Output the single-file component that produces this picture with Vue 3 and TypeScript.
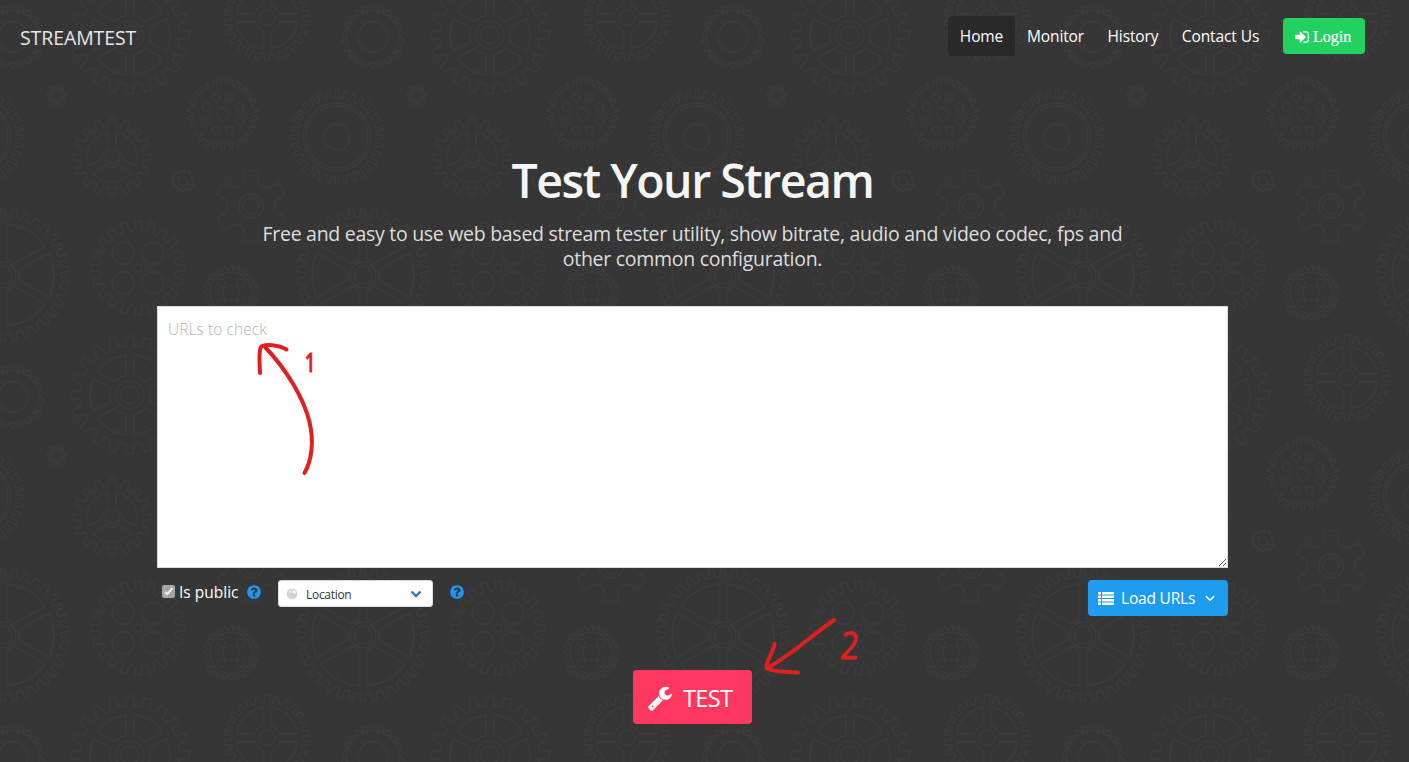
<script setup lang="ts">
import { ref } from 'vue'

interface NavItem { label: string; cls: string }
interface Gear { x: number; y: number; outer: number; inner: number; teeth: number; rings: number[]; spokes: number; hub: number; rim: number; holes?: number; holeR?: number; holeD?: number }

const nav: NavItem[] = [
  { label: 'Home', cls: 'home active' },
  { label: 'Monitor', cls: 'monitor' },
  { label: 'History', cls: 'history' },
  { label: 'Contact Us', cls: 'contact' },
]

const isPublic = ref(true)
const urls = ref('')

const TILE = 360
const gears: Gear[] = [
  { x: 130, y: 35, outer: 59, inner: 49, teeth: 20, rings: [9, 14], spokes: 6, hub: 20, rim: 40 },
  { x: 267, y: 18, outer: 43, inner: 36, teeth: 26, rings: [8], spokes: 4, hub: 13, rim: 31 },
  { x: 13, y: 37, outer: 31, inner: 28, teeth: 22, rings: [15, 26], spokes: 0, hub: 0, rim: 0 },
  { x: 57, y: 95, outer: 10, inner: 7, teeth: 9, rings: [5], spokes: 0, hub: 0, rim: 0 },
  { x: 223, y: 114, outer: 35, inner: 30, teeth: 26, rings: [6], spokes: 0, hub: 0, rim: 0, holes: 8, holeR: 4, holeD: 18 },
  { x: 337, y: 137, outer: 47, inner: 39, teeth: 32, rings: [13, 31, 34], spokes: 0, hub: 0, rim: 0 },
  { x: 112, y: 157, outer: 39, inner: 31, teeth: 16, rings: [7], spokes: 3, hub: 10, rim: 25 },
  { x: 183, y: 181, outer: 11, inner: 9, teeth: 10, rings: [5], spokes: 0, hub: 0, rim: 0 },
  { x: 251, y: 206, outer: 36, inner: 24, teeth: 6, rings: [8, 12], spokes: 0, hub: 0, rim: 0 },
  { x: 3, y: 275, outer: 66, inner: 58, teeth: 34, rings: [9, 13], spokes: 6, hub: 16, rim: 51 },
  { x: 138, y: 268, outer: 47, inner: 38, teeth: 20, rings: [4], spokes: 0, hub: 0, rim: 0, holes: 4, holeR: 11, holeD: 21 },
  { x: 231, y: 293, outer: 27, inner: 24, teeth: 24, rings: [8, 21], spokes: 0, hub: 0, rim: 0, holes: 4, holeR: 4, holeD: 14 },
]

const polar = (r: number, a: number) => `${(r * Math.sin(a)).toFixed(1)} ${(-r * Math.cos(a)).toFixed(1)}`

function gearPath(g: Gear): string {
  const step = (Math.PI * 2) / g.teeth
  let d = ''
  for (let i = 0; i < g.teeth; i++) {
    const a = i * step
    d += `${i ? 'L' : 'M'}${polar(g.inner, a - step * 0.3)}L${polar(g.outer, a - step * 0.18)}L${polar(g.outer, a + step * 0.18)}L${polar(g.inner, a + step * 0.3)}`
  }
  d += 'Z'
  const seg = (Math.PI * 2) / (g.spokes || 1)
  for (let i = 0; i < g.spokes; i++) {
    const a = i * seg
    const o = 4 / g.rim
    const h = 4 / g.hub
    d += `M${polar(g.hub, a + h)}L${polar(g.rim, a + o)}A${g.rim} ${g.rim} 0 0 1 ${polar(g.rim, a + seg - o)}L${polar(g.hub, a + seg - h)}A${g.hub} ${g.hub} 0 0 0 ${polar(g.hub, a + h)}Z`
  }
  return d
}

function holes(g: Gear) {
  const n = g.holes ?? 0
  return Array.from({ length: n }, (_, i) => {
    const a = ((i + 0.5) * Math.PI * 2) / n
    return { x: (g.holeD ?? 0) * Math.sin(a), y: (g.holeD ?? 0) * Math.cos(a) }
  })
}

// Gears crossing the tile edge are repeated on the neighbouring side.
const tiled = gears.flatMap((g) =>
  [-TILE, 0, TILE].flatMap((dx) =>
    [-TILE, 0, TILE].map((dy) => ({ g, x: g.x + dx, y: g.y + dy, d: gearPath(g), holes: holes(g) })),
  ).filter((p) => p.x > -70 && p.x < TILE + 70 && p.y > -70 && p.y < TILE + 70),
)

const questionPath = 'M1024 1376v-192q0-14-9-23t-23-9h-192q-14 0-23 9t-9 23v192q0 14 9 23t23 9h192q14 0 23-9t9-23zm256-672q0-88-55.5-163t-138.5-116-170-41q-243 0-371 213-15 24 8 42l132 100q7 6 19 6 16 0 25-12 53-68 86-92 34-24 86-24 48 0 85.5 26t37.5 59q0 38-20 61t-68 45q-63 28-115.5 86.5t-52.5 125.5v36q0 14 9 23t23 9h192q14 0 23-9t9-23q0-19 21.5-49.5t54.5-49.5q32-18 49-28.5t46-35 44.5-48 28-60.5 12.5-81zm384 192q0 209-103 385.5t-279.5 279.5-385.5 103-385.5-103-279.5-279.5-103-385.5 103-385.5 279.5-279.5 385.5-103 385.5 103 279.5 279.5 103 385.5z'
</script>

<template>
  <div class="page">
    <svg class="backdrop" aria-hidden="true">
      <defs>
        <pattern id="gears" :width="TILE" :height="TILE" patternUnits="userSpaceOnUse">
          <g v-for="(p, i) in tiled" :key="i" :transform="`translate(${p.x} ${p.y})`" class="gear">
            <path :d="p.d" />
            <circle v-for="r in p.g.rings" :key="r" :r="r" />
            <circle v-for="(h, k) in p.holes" :key="`h${k}`" :cx="h.x" :cy="h.y" :r="p.g.holeR" />
          </g>
        </pattern>
      </defs>
      <rect width="100%" height="100%" fill="url(#gears)" />
    </svg>

    <header class="navbar">
      <a class="brand">STREAMTEST</a>
      <nav class="menu">
        <a v-for="item in nav" :key="item.label" class="link" :class="item.cls"><span>{{ item.label }}</span></a>
        <button class="login" type="button">
          <svg viewBox="0 0 1792 1792" width="16" height="16"><path d="M1312 896q0 26-19 45l-544 544q-19 19-45 19t-45-19-19-45v-288h-448q-26 0-45-19t-19-45v-384q0-26 19-45t45-19h448v-288q0-26 19-45t45-19 45 19l544 544q19 19 19 45zm352-352v704q0 119-84.5 203.5t-203.5 84.5h-320q-13 0-22.5-9.5t-9.5-22.5q0-4-1-20t-.5-26.5 3-23.5 10-19.5 20.5-6.5h320q66 0 113-47t47-113v-704q0-66-47-113t-113-47h-312l-11.5-1-11.5-3-8-5.5-7-9-2-13.5q0-4-1-20t-.5-26.5 3-23.5 10-19.5 20.5-6.5h320q119 0 203.5 84.5t84.5 203.5z" /></svg>
          <span>Login</span>
        </button>
      </nav>
    </header>

    <main class="content">
      <h1 class="title">Test Your Stream</h1>
      <p class="subtitle">
        <span class="line first">Free and easy to use web based stream tester utility, show bitrate, audio and video codec, fps and</span>
        <span class="line second">other common configuration.</span>
      </p>

      <textarea v-model="urls" class="urls" placeholder="URLs to check" spellcheck="false"></textarea>

      <div class="options">
        <label class="public" @click.prevent="isPublic = !isPublic">
          <span class="check">
            <svg v-if="isPublic" viewBox="0 0 13 13" width="13" height="13"><path d="M3 6.8 5.4 9.2 10.3 3.2" /></svg>
          </span>
          <span class="public-text">Is public</span>
        </label>
        <svg class="help one" viewBox="0 0 1792 1792" width="16" height="16"><path :d="questionPath" /></svg>
        <div class="select">
          <svg class="globe" viewBox="0 0 12 12" width="12" height="12">
            <circle cx="6" cy="6" r="5.400" />
            <path d="M3.200 3.400 5.200 2 6 3.400 4.600 5.200zM7 2.400 9.200 2.800 10.200 5 8.200 6 7 4.600z" />
          </svg>
          <span class="select-text">Location</span>
          <svg class="chevron" viewBox="0 0 12 8" width="12" height="8"><path d="M1.500 1.500 6 6 10.500 1.500" /></svg>
        </div>
        <svg class="help two" viewBox="0 0 1792 1792" width="16" height="16"><path :d="questionPath" /></svg>
        <button class="load" type="button">
          <svg class="list" viewBox="0 0 16 13" width="16" height="13">
            <path d="M0 0h3v2.600H0zM4 0h12v2.600H4zM0 3.500h3v2.600H0zM4 3.500h12v2.600H4zM0 7h3v2.600H0zM4 7h12v2.600H4zM0 10.400h3V13H0zM4 10.400h12V13H4z" />
          </svg>
          <span class="load-text">Load URLs</span>
          <svg class="angle" viewBox="0 0 10 7" width="10" height="7"><path d="M1 1.200 5 5.200 9 1.200" /></svg>
        </button>
      </div>

      <button class="test" type="button">
        <svg viewBox="0 0 1792 1792" width="26" height="26"><path d="M448 1472q0-26-19-45t-45-19-45 19-19 45 19 45 45 19 45-19 19-45zm644-420l-682 682q-37 37-90 37-52 0-91-37l-106-108q-38-36-38-90 0-53 38-91l681-681q39 98 114.5 173.5t173.5 114.5zm634-435q0 39-23 106-47 134-164.5 217.5t-258.5 83.5q-185 0-316.5-131.5t-131.5-316.5 131.5-316.5 316.5-131.5q58 0 121.5 16.5t107.5 46.5q16 11 16 28t-16 28l-293 169v224l193 107q5-3 79-48.5t135.5-81 70.5-35.5q15 0 23.5 10t8.500 25z" /></svg>
        <span>TEST</span>
      </button>
    </main>

    <svg class="marks" viewBox="0 0 1409 762" width="1409" height="762">
      <g class="ink">
        <path d="M304.500 473C312 460 314 441 309.500 422C304 399 287 370 265 347" />
        <path d="M260 373C259.500 362 258.500 351 261 347C264 343.500 279 345 286.500 349.500" />
        <path d="M834 620C812 635 794 653 767.500 668" />
        <path d="M774.500 644C773.500 653 766 660 766.500 668C771 672 786 671.500 798 672.500" />
      </g>
      <text class="digit one" transform="translate(305 371.500) scale(.66 1)">1</text>
      <text class="digit two" transform="translate(839.500 659) skewX(-5) scale(.84 1)">2</text>
    </svg>
  </div>
</template>

<style>
html,
body {
  margin: 0;
  background: #363636;
}
</style>

<style scoped>
.page {
  position: relative;
  width: 1409px;
  height: 762px;
  overflow: hidden;
  background: #363636;
  color: #f5f5f5;
  font-family: "Open Sans", "Noto Sans", sans-serif;
  font-size: 16px;
}
.page *,
.page {
  box-sizing: border-box;
}
.backdrop {
  position: absolute;
  inset: 0;
  width: 100%;
  height: 100%;
}
.gear {
  fill: none;
  stroke: #3b3b3b;
  stroke-width: 1.3;
}
button {
  border: 0;
  border-radius: 4px;
  padding: 0;
  font-family: inherit;
  color: #fff;
  white-space: nowrap;
}
svg {
  flex: none;
}
.navbar {
  position: relative;
  display: flex;
  justify-content: space-between;
  height: 72px;
  padding: 16px 44px 0 20px;
}
.brand {
  height: 44px;
  line-height: 43px;
  font-size: 19.500px;
  letter-spacing: -0.1px;
  color: #e6e6e6;
}
.menu {
  display: flex;
}
.link {
  display: flex;
  justify-content: center;
  height: 40px;
  line-height: 41px;
  border-radius: 4px;
  font-size: 15.500px;
  letter-spacing: -0.1px;
  white-space: nowrap;
  color: #fff;
}
.active {
  background: #292929;
}
.home { width: 67px; }
.monitor { width: 81px; }
.history { width: 74px; }
.contact { width: 101px; }
.login {
  display: flex;
  align-items: center;
  width: 82px;
  height: 36px;
  margin: 2px 0 0 12px;
  padding: 1px 0 0 11px;
  gap: 3px;
  background: #23d160;
  font: 16px "Liberation Serif", serif;
  -webkit-text-stroke: 0.2px #fff;
}
.login svg,
.test svg {
  fill: #fff;
}
.content {
  position: relative;
  display: flex;
  flex-direction: column;
  align-items: center;
  width: 1071px;
  margin: 80px 0 0 157px;
}
.title {
  margin: 0;
  height: 56px;
  line-height: 56px;
  font-size: 46.500px;
  font-weight: 600;
  letter-spacing: -1.500px;
  white-space: nowrap;
  color: #f5f5f5;
}
.subtitle {
  margin: 13px 0 0;
  font-size: 19.500px;
  letter-spacing: -0.285px;
  line-height: 25px;
  color: #dedede;
  text-align: center;
}
.line {
  display: block;
  white-space: nowrap;
}
.urls {
  display: block;
  width: 1071px;
  height: 262px;
  margin: 35px 0 0;
  padding: 10px;
  border: 1px solid #dbdbdb;
  border-radius: 0;
  outline: none;
  resize: vertical;
  background: #fff;
  color: #363636;
  font: 15.500px/24px "Open Sans", "Noto Sans", sans-serif;
  letter-spacing: 0.080px;
}
.urls::placeholder {
  color: #b4b6ba;
  font-weight: 300;
}
.options {
  display: flex;
  align-items: flex-start;
  width: 100%;
  height: 36px;
  margin-top: 12px;
}
.public {
  display: flex;
  width: 84px;
  padding-left: 5px;
  line-height: 24px;
}
.check {
  width: 13px;
  height: 13px;
  margin: 5px 4px 0 0;
  border-radius: 2px;
  background: #a6a6a6;
}
.check svg {
  display: block;
  fill: none;
  stroke: #f0f0f0;
  stroke-width: 2;
}
.public-text {
  white-space: nowrap;
  font-size: 15.500px;
  color: #fff;
}
.help {
  margin-top: 4px;
  fill: #2196ee;
}
.help.one {
  margin-left: 5px;
}
.select {
  display: flex;
  align-items: center;
  width: 155px;
  height: 27px;
  margin-left: 16px;
  padding: 0 10px 0 7px;
  border: 1px solid #dbdbdb;
  border-radius: 3px;
  background: #fff;
  color: #363636;
  font-size: 12px;
  letter-spacing: -0.300px;
}
.globe {
  fill: #d4d4d4;
}
.globe path {
  fill: #f4f4f4;
}
.select-text {
  margin: 2px auto 0 8px;
}
.chevron {
  fill: none;
  stroke: #3273b8;
  stroke-width: 2.4;
}
.help.two {
  margin-left: 16px;
}
.load {
  display: flex;
  align-items: center;
  width: 140px;
  height: 36px;
  margin-left: auto;
  padding: 0 13px 0 10px;
  background: #209cee;
  font-size: 15.500px;
  letter-spacing: -0.200px;
}
.list {
  fill: #fff;
}
.load-text {
  margin-left: 7px;
}
.angle {
  margin-left: auto;
  fill: none;
  stroke: #fff;
  stroke-width: 1.6;
}
.test {
  display: flex;
  align-items: center;
  width: 119px;
  height: 54px;
  margin-top: 54px;
  padding: 2px 0 0 14px;
  gap: 10px;
  background: #ff3860;
  font-size: 23.500px;
}
.test span {
  letter-spacing: -0.600px;
}
.marks {
  position: absolute;
  inset: 0;
  pointer-events: none;
}
.ink {
  fill: none;
  stroke: #e01f20;
  stroke-width: 4;
  stroke-linecap: round;
  stroke-linejoin: round;
}
.digit {
  fill: #e01f20;
  stroke: #e01f20;
  stroke-width: 1;
}
.digit.one {
  font-size: 27px;
  font-weight: 600;
}
.digit.two {
  font-size: 38px;
  font-weight: 400;
}
</style>
